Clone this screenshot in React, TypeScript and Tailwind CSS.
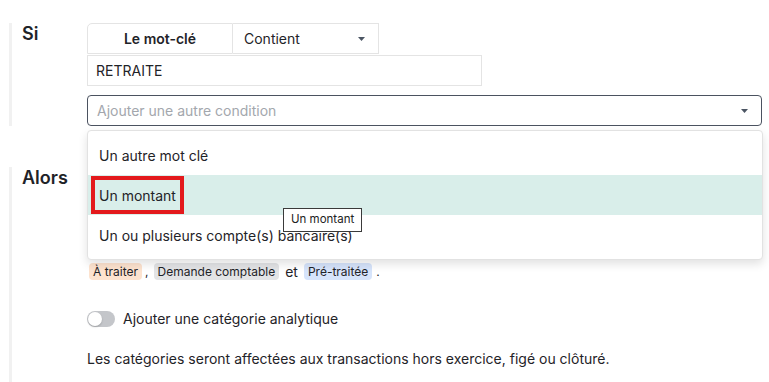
import React from "react";

function Caret() {
  return (
    <svg width="7" height="4" viewBox="0 0 7 4" className="shrink-0">
      <path d="M0 0 L7 0 L3.5 4 Z" fill="#4b5563" />
    </svg>
  );
}

export default function App() {
  return (
    <div className="min-h-[382px] w-[769px] bg-white pl-[9px] pt-[23px] font-['Inter',sans-serif] text-[#1f2328]">
      {/* Si */}
      <section className="flex border-l-[3px] border-[#f1f1f1]">
        <div className="w-[75px] pl-[10px] text-[18px] font-semibold leading-[22px]">Si</div>
        <div className="w-[675px]">
          <div className="flex h-[31px] w-[292px] text-[14px]">
            <div className="flex w-[146px] items-center justify-center rounded-tl-[5px] border border-[#e4e4e4] font-semibold">
              Le mot-clé
            </div>
            <div className="flex w-[146px] items-center justify-between border border-l-0 border-[#e4e4e4] pl-[11px] pr-[13px]">
              <span>Contient</span>
              <Caret />
            </div>
          </div>
          <div className="mt-[1px] flex h-[31px] w-[395px] items-center border border-[#e4e4e4] px-[8px] text-[14px]">
            RETRAITE
          </div>
          <div className="relative mt-[9px]">
            <div className="flex h-[31px] items-center justify-between rounded-[4px] border border-[#4b5260] pl-[9px] pr-[13px] text-[14px] text-[#a3a7ad]">
              <span>Ajouter une autre condition</span>
              <Caret />
            </div>
            {/* dropdown */}
            <div className="absolute left-0 top-[35px] z-10 w-[676px] rounded-[4px] border border-[#e2e2e2] bg-white py-[4px] text-[14px] shadow-[0_4px_10px_rgba(0,0,0,0.12)]">
              <div className="flex h-[40px] items-center px-[11px]">Un autre mot clé</div>
              <div className="relative flex h-[40px] items-center bg-[#d9eeea] px-[11px]">
                Un montant
                <div className="absolute left-[3px] top-[1px] h-[38px] w-[93px] border-[4px] border-[#e3191c]" />
              </div>
              <div className="flex h-[40px] items-center px-[11px]">Un ou plusieurs compte(s) bancaire(s)</div>
              <div className="absolute left-[195px] top-[77px] flex h-[24px] items-center border border-[#3a3a3a] bg-white px-[7px] text-[11.5px] text-[#222]">
                Un montant
              </div>
            </div>
          </div>
        </div>
      </section>

      {/* Alors */}
      <section className="mt-[41px] flex border-l-[3px] border-[#f1f1f1] pb-[12px]">
        <div className="w-[75px] pl-[10px] text-[18px] font-semibold leading-[22px]">Alors</div>
        <div className="w-[675px]">
          <div className="h-[96px]" />
          <div className="flex h-[17px] items-center text-[12px] leading-[17px]">
            <span className="ml-[2px] rounded-[4px] bg-[#fde3cf] px-[4px]">À traiter</span>
            <span className="ml-[3px]">,</span>
            <span className="ml-[5px] rounded-[4px] bg-[#e3e4e6] px-[4px]">Demande comptable</span>
            <span className="mx-[6px] text-[14px]">et</span>
            <span className="rounded-[4px] bg-[#d6e4fb] px-[4px]">Pré-traitée</span>
            <span className="ml-[4px]">.</span>
          </div>
          <div className="mt-[28px] flex h-[22px] items-center gap-[8px]">
            <div className="relative h-[16px] w-[28px] rounded-full bg-[#c4c6ca]">
              <div className="absolute left-[1px] top-[1px] h-[14px] w-[14px] rounded-full bg-white shadow-[0_1px_2px_rgba(0,0,0,0.2)]" />
            </div>
            <span className="text-[14px] leading-[22px]">Ajouter une catégorie analytique</span>
          </div>
          <p className="mt-[18px] text-[14px] leading-[22px]">
            Les catégories seront affectées aux transactions hors exercice, figé ou clôturé.
          </p>
        </div>
      </section>
    </div>
  );
}
